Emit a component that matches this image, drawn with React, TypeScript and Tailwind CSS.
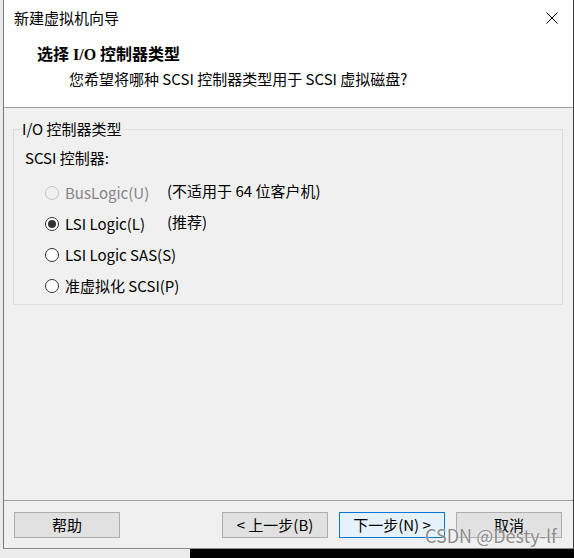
import React from "react";

function Radio({ checked, disabled }: { checked?: boolean; disabled?: boolean }) {
  return (
    <span
      className={
        "flex shrink-0 items-center justify-center w-[14px] h-[14px] rounded-full border " +
        (disabled ? "border-[#c5c5c5] bg-[#f0f0f0]" : "border-[#333333] bg-white")
      }
    >
      {checked ? <span className="block w-[8px] h-[8px] rounded-full bg-[#333333]" /> : null}
    </span>
  );
}

function Row({
  label,
  note,
  checked,
  disabled,
}: {
  label: string;
  note?: string;
  checked?: boolean;
  disabled?: boolean;
}) {
  return (
    <div className="flex items-center h-[31px] pl-[31px]">
      <Radio checked={checked} disabled={disabled} />
      <span
        className={
          "ml-[6px] leading-[20px] whitespace-nowrap " +
          (note ? "w-[102px] shrink-0 " : "") +
          (disabled ? "text-[#838383]" : "text-black")
        }
      >
        {label}
      </span>
      {note ? <span className="leading-[20px] -mt-[3px] whitespace-nowrap">{note}</span> : null}
    </div>
  );
}

function Btn({ children, primary }: { children: React.ReactNode; primary?: boolean }) {
  return (
    <div
      className={
        "flex items-center justify-center w-[106px] h-[26px] border leading-[20px] whitespace-nowrap " +
        (primary ? "border-[#0078d7] bg-[#e5f1fb]" : "border-[#adadad] bg-[#e1e1e1]")
      }
    >
      {children}
    </div>
  );
}

export default function App() {
  return (
    <div className="relative w-[574px] h-[558px] bg-black overflow-hidden font-['Noto_Sans_CJK_SC',sans-serif] text-[15px] text-black">
      <div className="flex h-[549px]">
        <div className="w-[3px] bg-[#ebebeb]" />
        <div className="flex flex-col w-[571px] h-[549px] border-l border-r border-b border-l-[#7a7a7a] border-r-[#3a3a3a] border-b-[#8a8a8a] bg-[#f0f0f0]">
          {/* title bar */}
          <div className="flex items-center justify-between h-[36px] bg-white pl-[10px] pr-[15px]">
            <span className="leading-[20px]">新建虚拟机向导</span>
            <svg width="12" height="12" viewBox="0 0 12 12" className="block">
              <path d="M0.5 0.5 L11.5 11.5 M11.5 0.5 L0.5 11.5" stroke="#000" strokeWidth="1" fill="none" />
            </svg>
          </div>
          {/* header */}
          <div className="h-[71px] bg-white pt-[9px]">
            <div className="pl-[33px] font-bold text-[16px] leading-[20px] font-['Liberation_Serif','Noto_Sans_CJK_SC',serif]">
              选择 I/O 控制器类型
            </div>
            <div className="mt-[4px] pl-[65px] leading-[20px]">您希望将哪种 SCSI 控制器类型用于 SCSI 虚拟磁盘?</div>
          </div>
          <div className="h-px bg-[#a0a0a0]" />
          {/* body */}
          <div className="flex flex-col flex-1">
            <div className="relative mt-[21px] ml-[9px] mr-[10px] h-[176px] border border-[#dcdcdc]">
              <span className="absolute left-[7px] top-[-11px] px-[1px] bg-[#f0f0f0] leading-[20px]">I/O 控制器类型</span>
              <div className="pt-[18px] pl-[11px] leading-[20px]">SCSI 控制器:</div>
              <div className="mt-[9px]">
                <Row label="BusLogic(U)" note="(不适用于 64 位客户机)" disabled />
                <Row label="LSI Logic(L)" note="(推荐)" checked />
                <Row label="LSI Logic SAS(S)" />
                <Row label="准虚拟化 SCSI(P)" />
              </div>
            </div>
            <div className="mt-auto h-px bg-[#a0a0a0]" />
            <div className="flex items-center pt-[11px] pb-[10px] pl-[10px] pr-[11px]">
              <Btn>帮助</Btn>
              <div className="flex-1" />
              <div className="flex gap-[11px]">
                <Btn>&lt; 上一步(B)</Btn>
                <Btn primary>下一步(N) &gt;</Btn>
                <Btn>取消</Btn>
              </div>
            </div>
          </div>
        </div>
      </div>
      <div className="flex h-[9px]">
        <div className="w-[190px] bg-[#ebebeb]" />
        <div className="flex-1 bg-black" />
      </div>
      <div className="absolute left-[425px] top-[526px] text-[18px] leading-[18px] text-[#8c8c8c] whitespace-nowrap [text-shadow:0_0_2px_#ffffff]">
        CSDN @Desty-lf
      </div>
    </div>
  );
}
